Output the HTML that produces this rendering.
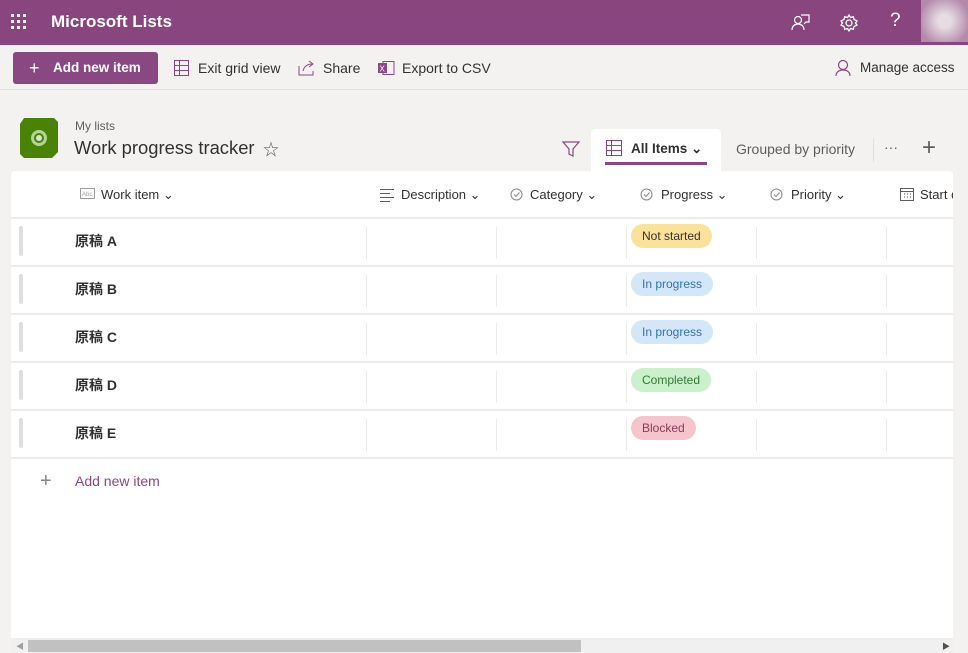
<!DOCTYPE html>
<html><head><meta charset="utf-8"><style>
*{box-sizing:border-box;margin:0;padding:0}
body{width:968px;height:653px;overflow:hidden;background:#f3f2f1;font-family:"Liberation Sans","Noto Sans CJK JP",sans-serif;color:#323130;position:relative}
.a{position:absolute}
.top{left:0;top:0;width:968px;height:45px;background:#88457e}
.cmd{left:0;top:45px;width:968px;height:45px;background:#f3f2f1;border-bottom:1px solid #e1dfdd}
.t{font-size:14px;white-space:nowrap}
.card{left:11px;top:171px;width:942px;height:470px;background:#fff;border-radius:4px 4px 0 0}
.hl{left:11px;width:942px;height:2px;background:#edebe9}
.pill{height:24px;border-radius:12px;font-size:12px;line-height:24px;padding:0 11px;white-space:nowrap}
.grip{left:19px;width:4px;height:30px;background:#e1dfdd;border-radius:2px}
.hd{top:187px;font-size:13px;color:#323130;white-space:nowrap}
.ck{top:188px}
</style></head><body>
<div class="a top"></div>
<svg class="a" style="left:10px;top:13px" width="18" height="18" fill="#fff"><g><rect x="1" y="1" width="3" height="3"/><rect x="7" y="1" width="3" height="3"/><rect x="13" y="1" width="3" height="3"/><rect x="1" y="7" width="3" height="3"/><rect x="7" y="7" width="3" height="3"/><rect x="13" y="7" width="3" height="3"/><rect x="1" y="13" width="3" height="3"/><rect x="7" y="13" width="3" height="3"/><rect x="13" y="13" width="3" height="3"/></g></svg>
<div class="a" style="left:51px;top:12px;color:#fff;font-size:17px;font-weight:bold">Microsoft Lists</div>
<svg class="a" style="left:791px;top:13px" width="20" height="20" fill="none" stroke="#fff" stroke-width="1.2"><circle cx="7" cy="7" r="3.5"/><path d="M1 17c0-4 3-6 6-6s6 2 6 6M10 2h8v7h-3l-2 2"/></svg>
<svg class="a" style="left:839px;top:13px" width="20" height="20" fill="none" stroke="#fff" stroke-width="1.3"><circle cx="10" cy="10" r="3"/><path d="M10 2l1.5 2.5 2.8-.8.8 2.8L18 8l-1.5 2 1.5 2-2.9 1.5-.8 2.8-2.8-.8L10 18l-1.5-2.5-2.8.8-.8-2.8L2 12l1.5-2L2 8l2.9-1.5.8-2.8 2.8.8z"/></svg>
<div class="a" style="left:890px;top:10px;color:#fff;font-size:19px">?</div>
<div class="a" style="left:921px;top:0;width:47px;height:42px;background:radial-gradient(circle,#e6dde4 20%,#b48aab 80%)"></div>
<div class="a cmd"></div>
<div class="a" style="left:13px;top:52px;width:145px;height:32px;background:#8a4883;border-radius:3px"></div>
<div class="a t" style="left:29px;top:58px;color:#fff;font-size:18px">+</div>
<div class="a t" style="left:53px;top:60px;color:#fff;font-weight:bold;font-size:13.5px">Add new item</div>
<svg class="a" style="left:173px;top:60px" width="17" height="16" fill="none" stroke="#8a4883"><rect x="1.5" y=".5" width="14" height="15"/><path d="M1.5 5.5h14M1.5 10.5h14M6.5.5v15"/></svg>
<div class="a t" style="left:198px;top:60px">Exit grid view</div>
<svg class="a" style="left:298px;top:60px" width="18" height="16" fill="none" stroke="#8a4883"><path d="M1 6v9h14v-4M5 11c1-5 5-7 9-7M11 1l4 3-4 3"/></svg>
<div class="a t" style="left:323px;top:60px">Share</div>
<svg class="a" style="left:377px;top:60px" width="18" height="16"><rect x="6" y="1.5" width="11" height="13" fill="none" stroke="#8a4883"/><rect x="1" y="3" width="9" height="10" fill="#8a4883"/><text x="2.5" y="11.5" font-size="8" fill="#fff" font-family="Liberation Sans">X</text></svg>
<div class="a t" style="left:402px;top:60px">Export to CSV</div>
<svg class="a" style="left:835px;top:59px" width="16" height="18" fill="none" stroke="#8a4883" stroke-width="1.2"><circle cx="8" cy="6" r="4.5"/><path d="M1 17c0-4 3-6 7-6s7 2 7 6"/></svg>
<div class="a t" style="left:860px;top:60px;font-size:13.5px">Manage access</div>
<svg class="a" style="left:18px;top:117px" width="42" height="42"><path d="M6 1h30l4 4v30l-6 6H6l-4-4V7z" fill="#498205"/><circle cx="21" cy="21" r="8" fill="#b5d39a"/><circle cx="21" cy="21" r="5" fill="#498205"/><circle cx="21" cy="21" r="3" fill="#d8e8c8"/></svg>
<div class="a" style="left:75px;top:119px;font-size:12px;color:#605e5c">My lists</div>
<div class="a" style="left:74px;top:137px;font-size:18.4px;white-space:nowrap">Work progress tracker</div>
<div class="a" style="left:263px;top:136px;font-size:16px;color:#605e5c">☆</div>
<svg class="a" style="left:562px;top:140px" width="18" height="18" fill="none" stroke="#8a4883" stroke-width="1.2"><path d="M1 2h16l-6 7v7l-4-2V9z"/></svg>
<div class="a" style="left:591px;top:129px;width:130px;height:45px;background:#fff;border-radius:4px 4px 0 0"></div>
<svg class="a" style="left:606px;top:140px" width="17" height="17" fill="none" stroke="#8a4883"><rect x=".5" y=".5" width="15" height="15"/><path d="M.5 5.5h15M.5 10.5h15M5.5.5v15"/></svg>
<div class="a t" style="left:631px;top:141px;font-weight:bold;color:#323130;font-size:13.5px">All Items ⌄</div>
<div class="a" style="left:605px;top:162px;width:102px;height:3px;background:#8a4883"></div>
<div class="a t" style="left:736px;top:141px;color:#605e5c">Grouped by priority</div>
<div class="a" style="left:873px;top:138px;width:1px;height:24px;background:#e1dfdd"></div>
<div class="a t" style="left:884px;top:139px;color:#605e5c">···</div>
<div class="a" style="left:922px;top:134px;font-size:24px;color:#605e5c;font-weight:300">+</div>
<div class="a card"></div>
<svg class="a" style="left:80px;top:188px" width="15" height="12"><rect x=".5" y=".5" width="14" height="10" fill="none" stroke="#a19f9d"/><text x="2" y="8" font-size="6" fill="#a19f9d">Abc</text></svg>
<div class="a hd" style="left:101px">Work item ⌄</div>
<svg class="a" style="left:380px;top:188px" width="15" height="14" stroke="#605e5c"><path d="M0 1.5h14M0 5.5h10M0 9.5h14M0 13.5h10"/></svg>
<div class="a hd" style="left:401px">Description ⌄</div>
<svg class="a ck" style="left:510px" width="13" height="13" fill="none" stroke="#8a8886"><circle cx="6.5" cy="6.5" r="5.5"/><path d="M4 6.5l2 2 3.5-4"/></svg><div class="a hd" style="left:530px">Category ⌄</div>
<svg class="a ck" style="left:640px" width="13" height="13" fill="none" stroke="#8a8886"><circle cx="6.5" cy="6.5" r="5.5"/><path d="M4 6.5l2 2 3.5-4"/></svg><div class="a hd" style="left:661px">Progress ⌄</div>
<svg class="a ck" style="left:770px" width="13" height="13" fill="none" stroke="#8a8886"><circle cx="6.5" cy="6.5" r="5.5"/><path d="M4 6.5l2 2 3.5-4"/></svg><div class="a hd" style="left:791px">Priority ⌄</div>
<svg class="a" style="left:900px;top:187px" width="14" height="14" fill="none" stroke="#605e5c"><rect x=".5" y="1.5" width="13" height="12"/><path d="M.5 4.5h13M4 7h1M7 7h1M10 7h1M4 10h1M7 10h1M10 10h1"/></svg>
<div class="a hd" style="left:920px;width:33px;overflow:hidden">Start da</div>
<div class="a hl" style="top:217px"></div>
<div class="a hl" style="top:265px"></div>
<div class="a hl" style="top:313px"></div>
<div class="a hl" style="top:361px"></div>
<div class="a hl" style="top:409px"></div>
<div class="a hl" style="top:457px"></div>

<div class="a grip" style="top:226px"></div><div class="a grip" style="top:274px"></div><div class="a grip" style="top:322px"></div><div class="a grip" style="top:370px"></div><div class="a grip" style="top:418px"></div>
<div class="a t" style="left:75px;top:231px;font-weight:bold">原稿 A</div>
<div class="a t" style="left:75px;top:279px;font-weight:bold">原稿 B</div>
<div class="a t" style="left:75px;top:327px;font-weight:bold">原稿 C</div>
<div class="a t" style="left:75px;top:375px;font-weight:bold">原稿 D</div>
<div class="a t" style="left:75px;top:423px;font-weight:bold">原稿 E</div>

<svg class="a" style="left:0;top:219px" width="968" height="240"><g fill="#edebe9">
<rect x="366" y="8" width="1" height="32"/><rect x="496" y="8" width="1" height="32"/><rect x="626" y="8" width="1" height="32"/><rect x="756" y="8" width="1" height="32"/><rect x="886" y="8" width="1" height="32"/>
<rect x="366" y="56" width="1" height="32"/><rect x="496" y="56" width="1" height="32"/><rect x="626" y="56" width="1" height="32"/><rect x="756" y="56" width="1" height="32"/><rect x="886" y="56" width="1" height="32"/>
<rect x="366" y="104" width="1" height="32"/><rect x="496" y="104" width="1" height="32"/><rect x="626" y="104" width="1" height="32"/><rect x="756" y="104" width="1" height="32"/><rect x="886" y="104" width="1" height="32"/>
<rect x="366" y="152" width="1" height="32"/><rect x="496" y="152" width="1" height="32"/><rect x="626" y="152" width="1" height="32"/><rect x="756" y="152" width="1" height="32"/><rect x="886" y="152" width="1" height="32"/>
<rect x="366" y="200" width="1" height="32"/><rect x="496" y="200" width="1" height="32"/><rect x="626" y="200" width="1" height="32"/><rect x="756" y="200" width="1" height="32"/><rect x="886" y="200" width="1" height="32"/>
</g></svg>
<div class="a pill" style="left:631px;top:224px;background:#fbe29a;color:#323130">Not started</div>
<div class="a pill" style="left:631px;top:272px;background:#d3e7f8;color:#2f73b5">In progress</div>
<div class="a pill" style="left:631px;top:320px;background:#d3e7f8;color:#2f73b5">In progress</div>
<div class="a pill" style="left:631px;top:368px;background:#caf0cc;color:#2e7d32">Completed</div>
<div class="a pill" style="left:631px;top:416px;background:#f6c4cc;color:#8a3a5c">Blocked</div>

<div class="a" style="left:40px;top:470px;font-size:20px;color:#8a8886;font-weight:300">+</div>
<div class="a t" style="left:75px;top:473px;color:#8a4883">Add new item</div>
<div class="a" style="left:11px;top:638px;width:942px;height:15px;background:#f0f0f0"></div>
<div class="a" style="left:28px;top:640px;width:553px;height:12px;background:#c1c1c1"></div>
<div class="a" style="left:16px;top:641px;font-size:8px;color:#a0a0a0">◀</div>
<div class="a" style="left:942px;top:641px;font-size:8px;color:#505050">▶</div>
</body></html>
